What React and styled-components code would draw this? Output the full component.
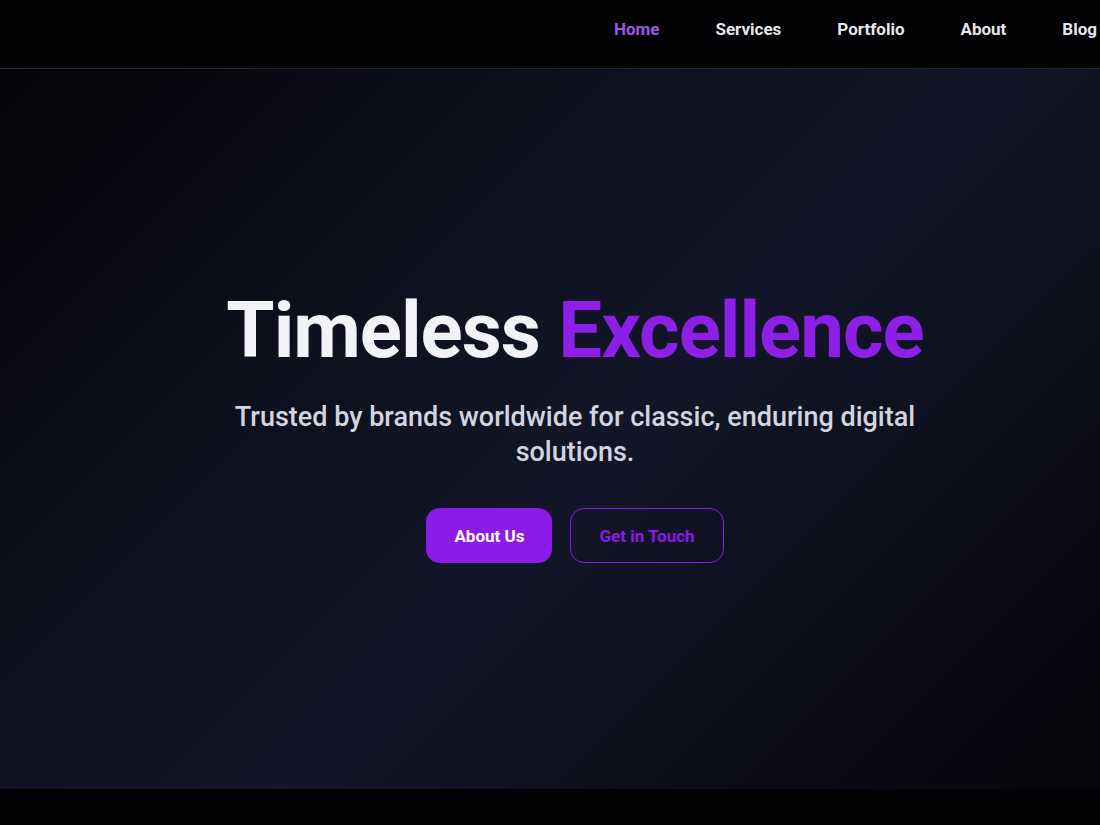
import React from "react";
import styled, { createGlobalStyle } from "styled-components";

const GlobalStyle = createGlobalStyle`
  html, body {
    margin: 0;
    padding: 0;
    background: #020103;
    font-family: Roboto, "Liberation Sans", sans-serif;
    overflow: hidden;
  }
  * { box-sizing: border-box; }
`;

const links = ["Home", "Services", "Portfolio", "About", "Blog"];

const App = () => (
  <Page>
    <GlobalStyle />
    <NavBar>
      <NavList>
        {links.map((l, i) => (
          <NavLink key={l} $active={i === 0}>{l}</NavLink>
        ))}
      </NavList>
    </NavBar>
    <Hero>
      <Title>
        Timeless <Accent>Excellence</Accent>
      </Title>
      <Subtitle>
        Trusted by brands worldwide for classic, enduring digital solutions.
      </Subtitle>
      <Actions>
        <PrimaryButton>About Us</PrimaryButton>
        <GhostButton>Get in Touch</GhostButton>
      </Actions>
    </Hero>
    <Footer />
  </Page>
);

export default App;

const Page = styled.div`
  width: 1100px;
  height: 825px;
  overflow: hidden;
  background: #020103;
`;

const NavBar = styled.nav`
  height: 69px;
  background: #020103;
  border-bottom: 1px solid #22252f;
  display: flex;
  justify-content: flex-end;
  padding-right: 3px;
`;

const NavList = styled.ul`
  list-style: none;
  margin: 0;
  padding: 0;
  display: flex;
  align-items: center;
  gap: 56px;
`;

const NavLink = styled.li`
  font-size: 17px;
  font-weight: 700;
  color: ${(p) => (p.$active ? "#9b59e6" : "#e6e6ea")};
  margin-top: -10px;
  white-space: nowrap;
`;

const Hero = styled.section`
  height: 720px;
  background: linear-gradient(135deg, #040407 0%, #0d0f1d 30%, #121628 55%, #0b0c18 80%, #050409 100%);
  display: flex;
  flex-direction: column;
  align-items: center;
  justify-content: center;
  padding: 0 0 0 50px;
  text-align: center;
`;

const Title = styled.h1`
  margin: -9px 0 0;
  font-size: 78px;
  font-weight: 700;
  line-height: 1.15;
  letter-spacing: -1px;
  color: #f3f3f7;
`;

const Accent = styled.span`
  color: #8d1fe6;
`;

const Subtitle = styled.p`
  margin: 25px 0 0;
  max-width: 720px;
  font-size: 27px;
  line-height: 35px;
  font-weight: 500;
  color: #d4d4e0;
`;

const Actions = styled.div`
  display: flex;
  gap: 18px;
  margin-top: 38px;
`;

const PrimaryButton = styled.button`
  height: 55px;
  padding: 0 28px;
  border: none;
  border-radius: 14px;
  background: #8d1ae6;
  color: #ffffff;
  font-family: inherit;
  font-size: 17px;
  font-weight: 700;
`;

const GhostButton = styled.button`
  height: 55px;
  padding: 0 28px;
  border: 1px solid #8d1ae6;
  border-radius: 14px;
  background: transparent;
  color: #8d1ae6;
  font-family: inherit;
  font-size: 17px;
  font-weight: 700;
`;

const Footer = styled.div`
  height: 36px;
  background: #020103;
`;
